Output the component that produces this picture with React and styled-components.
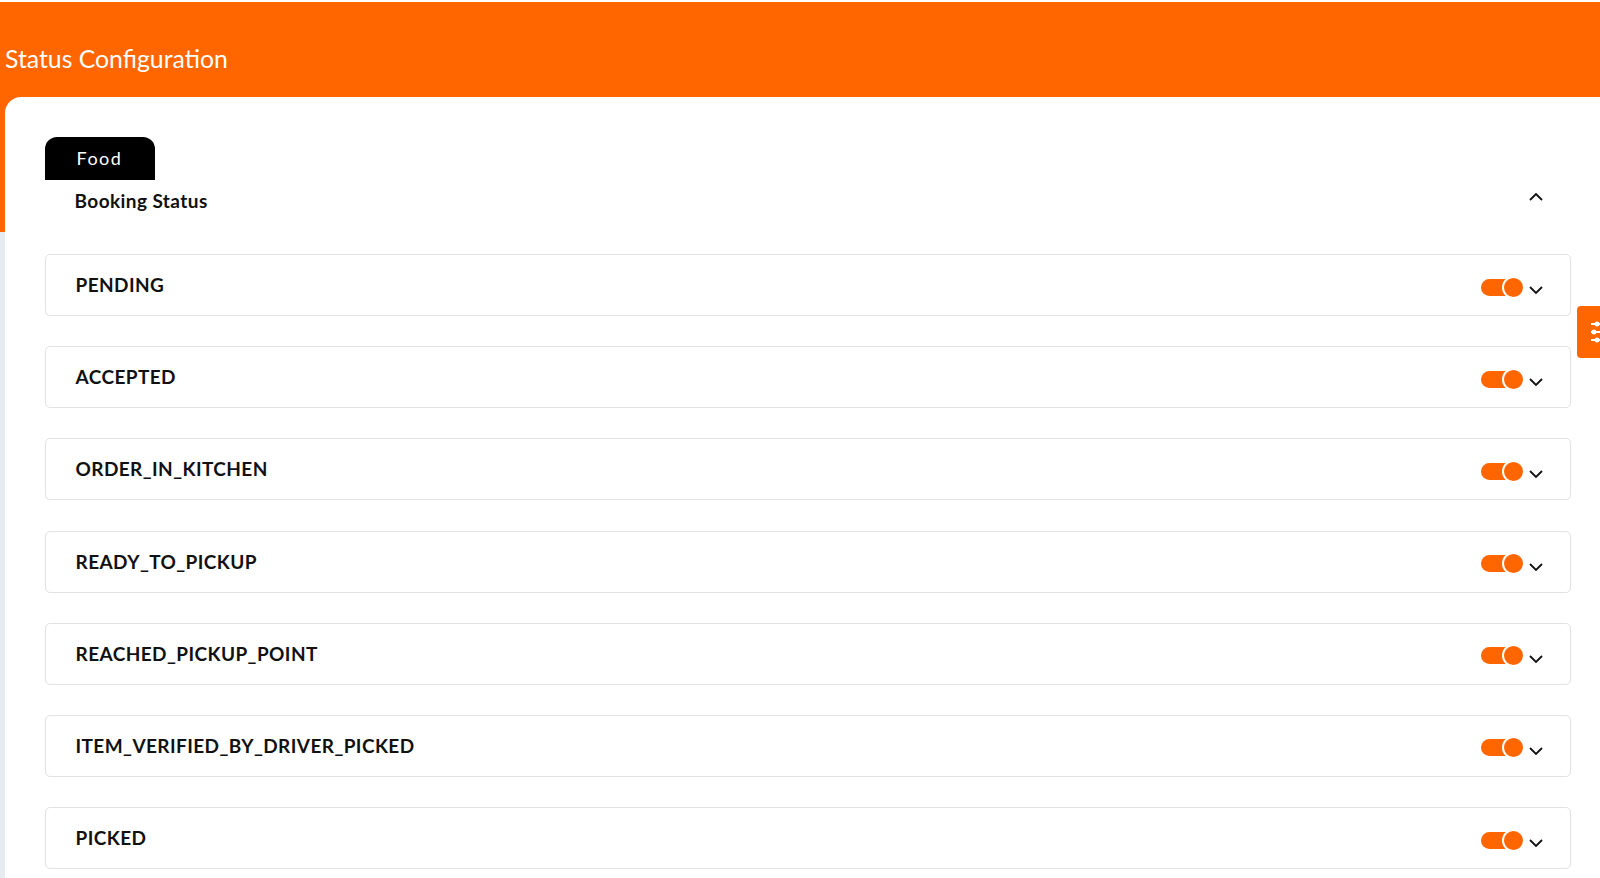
import styled, { createGlobalStyle } from "styled-components"

const statuses = [
    "PENDING",
    "ACCEPTED",
    "ORDER_IN_KITCHEN",
    "READY_TO_PICKUP",
    "REACHED_PICKUP_POINT",
    "ITEM_VERIFIED_BY_DRIVER_PICKED",
    "PICKED",
]

const Chevron = ({ up }) => (
    <ChevronSvg viewBox="0 0 16 10" $up={up}>
        <path d="M2 2l6 6 6-6" fill="none" stroke="#111" strokeWidth="1.8" />
    </ChevronSvg>
)

export default function App() {
    return <>
        <GlobalStyle />
        <Page>
            <Header>
                <Title>Status Configuration</Title>
            </Header>
            <Panel>
                <Tab>Food</Tab>
                <SectionHead>
                    <SectionTitle>Booking Status</SectionTitle>
                    <Chevron up />
                </SectionHead>
                <List>
                    {statuses.map((s) => (
                        <Row key={s}>
                            <RowLabel>{s}</RowLabel>
                            <Controls>
                                <Toggle><Thumb /></Toggle>
                                <Chevron />
                            </Controls>
                        </Row>
                    ))}
                </List>
            </Panel>
            <SideTab>
                <svg width="22" height="22" viewBox="0 0 22 22" fill="#fff" stroke="#fff" strokeWidth="2">
                    <path d="M0 3h22M0 11h22M0 19h22" />
                    <circle cx="6" cy="3" r="1.5" />
                    <circle cx="3" cy="11" r="1.5" />
                    <circle cx="6" cy="19" r="1.5" />
                </svg>
            </SideTab>
        </Page>
    </>
}

const GlobalStyle = createGlobalStyle`
html, body {
    margin: 0;
    padding: 0;
    height: 100%;
    overflow: hidden;
}
body {
    font-family: "Lato", "Liberation Sans", sans-serif;
}
`
const Page = styled.div`
position: relative;
height: 878px;
overflow: hidden;
padding-top: 2px;
box-sizing: border-box;
background: linear-gradient(#fff 0 2px, #ff6600 2px 232px, #e6eaf1 232px);
`
const Header = styled.div`
height: 95px;
padding-left: 5px;
display: flex;
align-items: flex-start;
`
const Title = styled.h1`
margin: 41px 0 0;
font-size: 24.8px;
line-height: 32px;
font-weight: 400;
color: #fff;
`
const Panel = styled.div`
margin-left: 5px;
height: 781px;
padding: 40px 0 0 39.5px;
box-sizing: border-box;
background: #fff;
border-top-left-radius: 16px;
`
const Tab = styled.div`
width: 110.5px;
height: 43px;
box-sizing: border-box;
padding: 11px 0 0 32px;
background: #000;
color: #fff;
font-size: 18px;
line-height: 20px;
letter-spacing: 1.5px;
border-radius: 12px 12px 0 0;
`
const SectionHead = styled.div`
display: flex;
justify-content: space-between;
align-items: flex-start;
width: 1526.5px;
height: 74px;
box-sizing: border-box;
padding: 9px 27px 0 30px;
`
const SectionTitle = styled.div`
font-size: 19px;
line-height: 24px;
font-weight: 700;
letter-spacing: 0.42px;
color: #111;
`
const ChevronSvg = styled.svg`
width: 16px;
height: 10px;
flex-shrink: 0;
transform: ${(p) => (p.$up ? "rotate(180deg)" : "none")};
margin-top: ${(p) => (p.$up ? "3px" : "6px")};
`
const List = styled.div`
display: flex;
flex-direction: column;
gap: 30.2px;
width: 1526.5px;
`
const Row = styled.div`
height: 62px;
box-sizing: border-box;
display: flex;
align-items: center;
justify-content: space-between;
padding: 0 26px 0 30px;
background: #fff;
border: 1px solid #e0e2e6;
border-radius: 5px;
`
const RowLabel = styled.div`
font-size: 19px;
line-height: 24px;
font-weight: 700;
letter-spacing: 0.42px;
color: #111;
`
const Controls = styled.div`
display: flex;
align-items: center;
gap: 5px;
margin-top: 4px;
`
const Toggle = styled.div`
position: relative;
width: 42px;
height: 17px;
background: #ff6600;
border-radius: 9px;
`
const Thumb = styled.div`
position: absolute;
top: -3px;
right: -2px;
width: 19px;
height: 19px;
background: #ff6600;
border: 2px solid #fff;
border-radius: 50%;
`
const SideTab = styled.div`
position: absolute;
top: 306px;
right: 0;
width: 23px;
height: 52px;
display: flex;
align-items: center;
padding-left: 14px;
box-sizing: border-box;
overflow: hidden;
background: #ff6600;
border-radius: 4px 0 0 4px;
& svg {
    flex-shrink: 0;
}
`
